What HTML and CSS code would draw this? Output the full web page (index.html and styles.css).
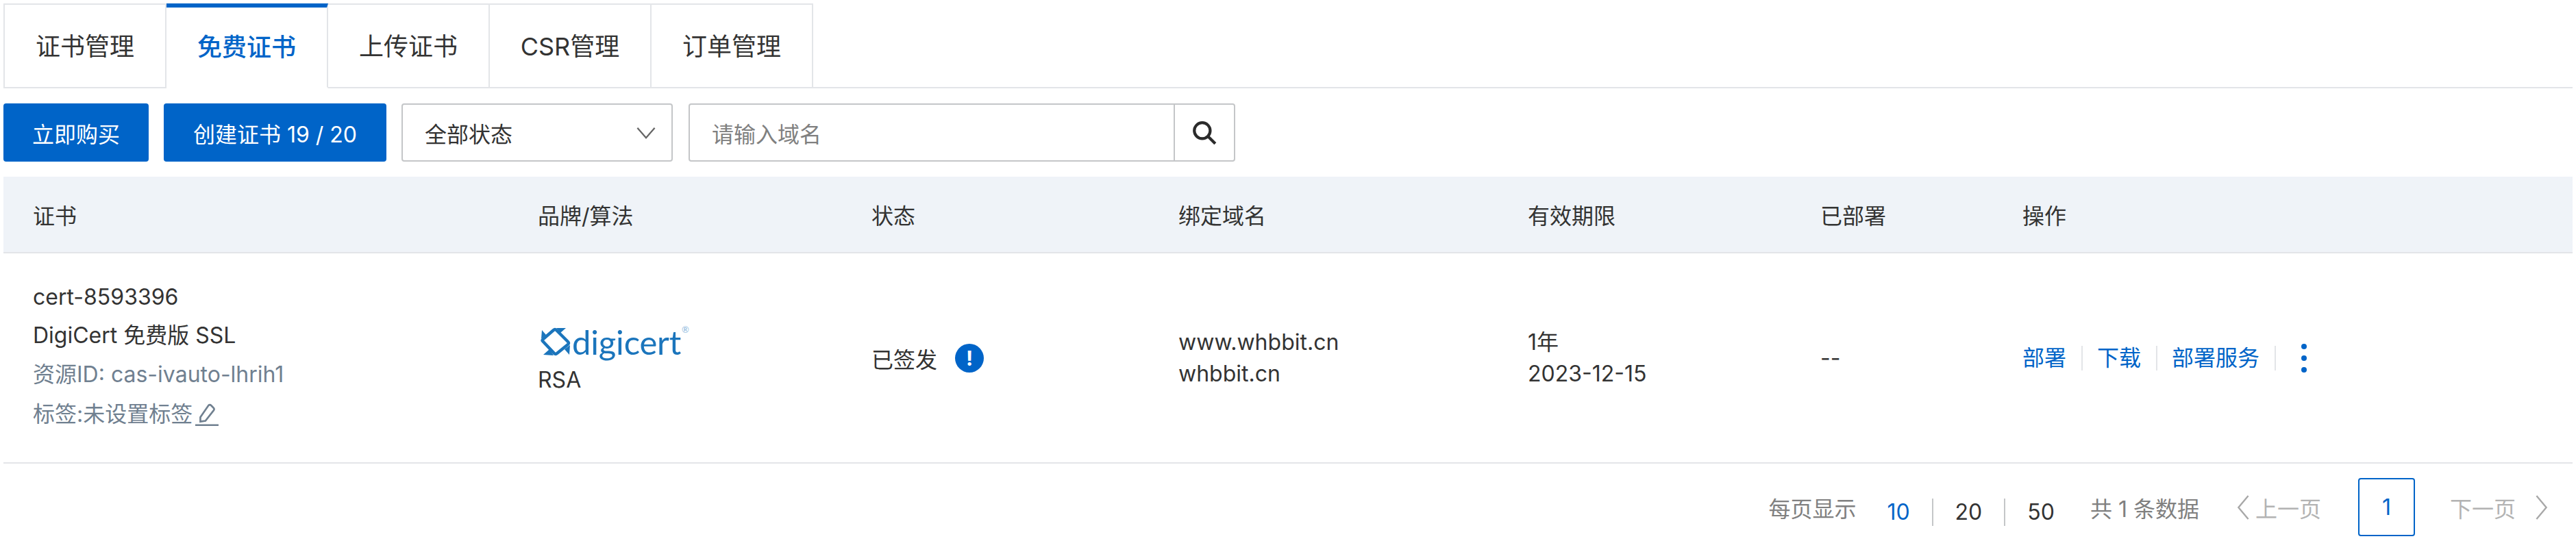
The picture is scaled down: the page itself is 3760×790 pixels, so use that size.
FILE: index.html
```html
<!DOCTYPE html>
<html lang="zh-CN">

<head>
    <meta charset="UTF-8">
    <title>SSL证书</title>
    <link rel="stylesheet" href="styles.css">
</head>

<body>

    <nav class="tabs">
        <a class="tab" href="#">证书管理</a>
        <a class="tab active" href="#">免费证书</a>
        <a class="tab" href="#">上传证书</a>
        <a class="tab" href="#">CSR管理</a>
        <a class="tab" href="#">订单管理</a>
    </nav>

    <div class="toolbar">
        <button class="btn btn-buy">立即购买</button>
        <button class="btn btn-create">创建证书 19 / 20</button>
        <div class="select">
            <span>全部状态</span>
            <svg class="select-arrow" viewBox="0 0 32 20"><path d="M2 2 L16 18 L30 2" /></svg>
        </div>
        <div class="search">
            <span class="search-input">请输入域名</span>
            <span class="search-btn">
                <svg viewBox="0 0 36 36"><circle cx="15" cy="15" r="11" /><path d="M23 23 L33 33" /></svg>
            </span>
        </div>
    </div>

    <div class="table">
        <div class="row head">
            <div>证书</div>
            <div>品牌/算法</div>
            <div>状态</div>
            <div>绑定域名</div>
            <div>有效期限</div>
            <div>已部署</div>
            <div>操作</div>
        </div>
        <div class="row body">
            <div class="cert">
                <p>cert-8593396</p>
                <p>DigiCert 免费版 SSL</p>
                <p class="muted">资源ID: cas-ivauto-lhrih1</p>
                <p class="muted">标签:未设置标签
                    <svg class="edit" viewBox="0 0 32 32"><path d="M7 20 L18 4 Q20 2 22 4 L25 7 Q27 9 25 11 L14 25 L7 26 Z" /><path d="M0 31 H32" /></svg>
                </p>
            </div>
            <div class="brand">
                <div class="logo">
                    <svg class="logo-mark" viewBox="0 0 46 44">
                        <path d="M4 21 Q3 20 5 18 L20 5 Q22 3 24 5 L41 22 Q43 24 41 26 L25 39 Q23 41 21 39 Z" />
                        <path class="tip" d="M24 2 L38 2 L30 9 Z" />
                        <path class="tip" d="M3 5 L2 18 L9 12 Z" />
                        <path class="tip" d="M43 41 L44 27 L36 33 Z" />
                        <path class="tip" d="M5 41 L20 42 L14 33 Z" />
                    </svg>
                    <span class="logo-word">digicert</span>
                    <span class="logo-reg">®</span>
                </div>
                <p>RSA</p>
            </div>
            <div class="status">
                <span>已签发</span>
                <span class="status-icon">!</span>
            </div>
            <div class="lines">
                <p>www.whbbit.cn</p>
                <p>whbbit.cn</p>
            </div>
            <div class="lines">
                <p>1年</p>
                <p>2023-12-15</p>
            </div>
            <div>--</div>
            <div class="actions">
                <a href="#">部署</a>
                <a href="#">下载</a>
                <a href="#">部署服务</a>
                <span class="more"><i></i><i></i><i></i></span>
            </div>
        </div>
    </div>

    <div class="pager">
        <span class="grey">每页显示</span>
        <div class="sizes">
            <a class="on" href="#">10</a>
            <a href="#">20</a>
            <a href="#">50</a>
        </div>
        <span class="grey total">共 1 条数据</span>
        <span class="page-nav prev">
            <svg viewBox="0 0 20 40"><path d="M18 2 L3 20 L18 38" /></svg>
            上一页
        </span>
        <span class="page-num">1</span>
        <span class="page-nav next">
            下一页
            <svg viewBox="0 0 20 40"><path d="M2 2 L17 20 L2 38" /></svg>
        </span>
    </div>

</body>

</html>
```

FILE: styles.css
```css
* {
    box-sizing: border-box;
}

body {
    margin: 0;
    padding: 5px 5px 0;
    width: 3760px;
    height: 790px;
    overflow: hidden;
    background-color: white;
    color: #333;
    font-family: Inter, "Noto Sans CJK SC", sans-serif;
    font-size: 32px;
}

p {
    margin: 0;
}

a {
    text-decoration: none;
}

/* tabs */
.tabs {
    display: flex;
    height: 124px;
    border-bottom: 2px solid #e3e5e8;
}

.tab {
    width: 236px;
    height: 124px;
    padding-bottom: 6px;
    display: flex;
    align-items: center;
    justify-content: center;
    color: #333;
    font-size: 36px;
    border-top: 2px solid #e3e5e8;
    border-right: 2px solid #e3e5e8;
}

.tab:first-child {
    width: 238px;
    border-left: 2px solid #e3e5e8;
}

.tab.active {
    color: #0064c8;
    font-weight: 500;
    border-top: 6px solid #0064c8;
    border-bottom: 2px solid white;
}

/* toolbar */
.toolbar {
    display: flex;
    gap: 22px;
    margin-top: 22px;
    height: 85px;
}

.btn {
    height: 85px;
    border: none;
    border-radius: 4px;
    background-color: #0064c8;
    color: white;
    font-family: inherit;
    font-size: 32px;
    padding: 0;
}

.btn-buy {
    width: 212px;
}

.btn-create {
    width: 325px;
}

.select {
    width: 396px;
    display: flex;
    align-items: center;
    justify-content: space-between;
    padding: 0 22px 0 32px;
    border: 2px solid #c4c6c8;
    border-radius: 4px;
}

.select-arrow {
    width: 30px;
    height: 18px;
    fill: none;
    stroke: #666;
    stroke-width: 2.5;
}

.search {
    display: flex;
    width: 798px;
    margin-left: 1px;
    border: 2px solid #c4c6c8;
    border-radius: 4px;
}

.search-input {
    flex: 1;
    padding-left: 32px;
    display: flex;
    align-items: center;
    color: #808080;
}

.search-btn {
    width: 88px;
    display: flex;
    align-items: center;
    justify-content: center;
    border-left: 2px solid #c4c6c8;
}

.search-btn svg {
    width: 38px;
    height: 38px;
    fill: none;
    stroke: #2b2b2b;
    stroke-width: 4;
}

/* table */
.table {
    margin-top: 22px;
    width: 3750px;
}

.row {
    display: grid;
    grid-template-columns: 737px 487px 448px 510px 427px 295px 846px;
    padding-left: 43px;
    align-items: center;
    border-bottom: 2px solid #e3e5e8;
}

.head {
    height: 112px;
    background-color: #eff3f8;
}

.body {
    height: 307px;
}

.cert {
    padding-bottom: 3px;
}

.cert p {
    height: 57px;
    line-height: 57px;
    white-space: nowrap;
}

.cert p:first-child {
    height: 54px;
    line-height: 54px;
}

.cert p:last-child {
    height: 60px;
    line-height: 60px;
}

.muted {
    color: #708090;
    display: flex;
    align-items: center;
    gap: 4px;
}

.edit {
    width: 34px;
    height: 34px;
    fill: none;
    stroke: #708090;
    stroke-width: 2.5;
}

.brand {
    padding-top: 1px;
}

.logo {
    display: flex;
    align-items: center;
    height: 52px;
    margin-bottom: 10px;
    margin-left: 3px;
    color: #1b75bc;
}

.logo-mark {
    width: 46px;
    height: 44px;
    fill: none;
    stroke: #1b75bc;
    stroke-width: 4.5;
    stroke-linejoin: round;
}

.logo-mark .tip {
    fill: #1b75bc;
    stroke: none;
}

.logo-word {
    font-family: Lato, sans-serif;
    font-size: 49px;
    line-height: 52px;
    letter-spacing: -0.2px;
    margin-left: 1px;
}

.logo-reg {
    align-self: flex-start;
    font-family: Lato, sans-serif;
    font-size: 13px;
    color: #8cb8dc;
    margin-left: 1px;
}

.status {
    display: flex;
    align-items: center;
    gap: 26px;
}

.status-icon {
    width: 42px;
    height: 42px;
    border-radius: 50%;
    background-color: #0064c8;
    color: white;
    font-weight: 700;
    font-size: 30px;
    line-height: 42px;
    text-align: center;
}

.lines p {
    height: 46px;
    line-height: 46px;
}

.actions {
    display: flex;
    align-items: center;
}

.actions a {
    color: #0064c8;
    padding-right: 22px;
    margin-right: 21px;
    border-right: 2px solid #e3e5e8;
    line-height: 36px;
}

.more {
    display: flex;
    flex-direction: column;
    gap: 9px;
    margin-left: 16px;
}

.more i {
    width: 8px;
    height: 8px;
    border-radius: 50%;
    background-color: #0064c8;
}

/* pager */
.pager {
    display: flex;
    justify-content: flex-end;
    align-items: center;
    height: 85px;
    margin-top: 21px;
    padding-right: 35px;
}

.grey {
    color: #808080;
}

.sizes {
    display: flex;
    margin: 14px 0 0 45px;
}

.sizes a {
    color: #333;
    padding: 0 32px;
    border-right: 2px solid #c4c6c8;
    line-height: 40px;
}

.sizes a:first-child {
    padding-left: 0;
}

.sizes a:last-child {
    border-right: none;
    padding-right: 0;
}

.sizes .on {
    color: #0064c8;
}

.total {
    margin-left: 52px;
}

.page-nav {
    display: flex;
    align-items: center;
    color: #b3b3b3;
}

.page-nav svg {
    width: 20px;
    height: 38px;
    fill: none;
    stroke: #a8a8a8;
    stroke-width: 2.5;
}

.prev {
    margin-left: 54px;
    gap: 8px;
}

.next {
    gap: 28px;
}

.page-num {
    width: 83px;
    height: 85px;
    margin: 0 51px 0 54px;
    display: flex;
    align-items: center;
    justify-content: center;
    border: 2px solid #0064c8;
    border-radius: 4px;
    color: #0064c8;
}
```
